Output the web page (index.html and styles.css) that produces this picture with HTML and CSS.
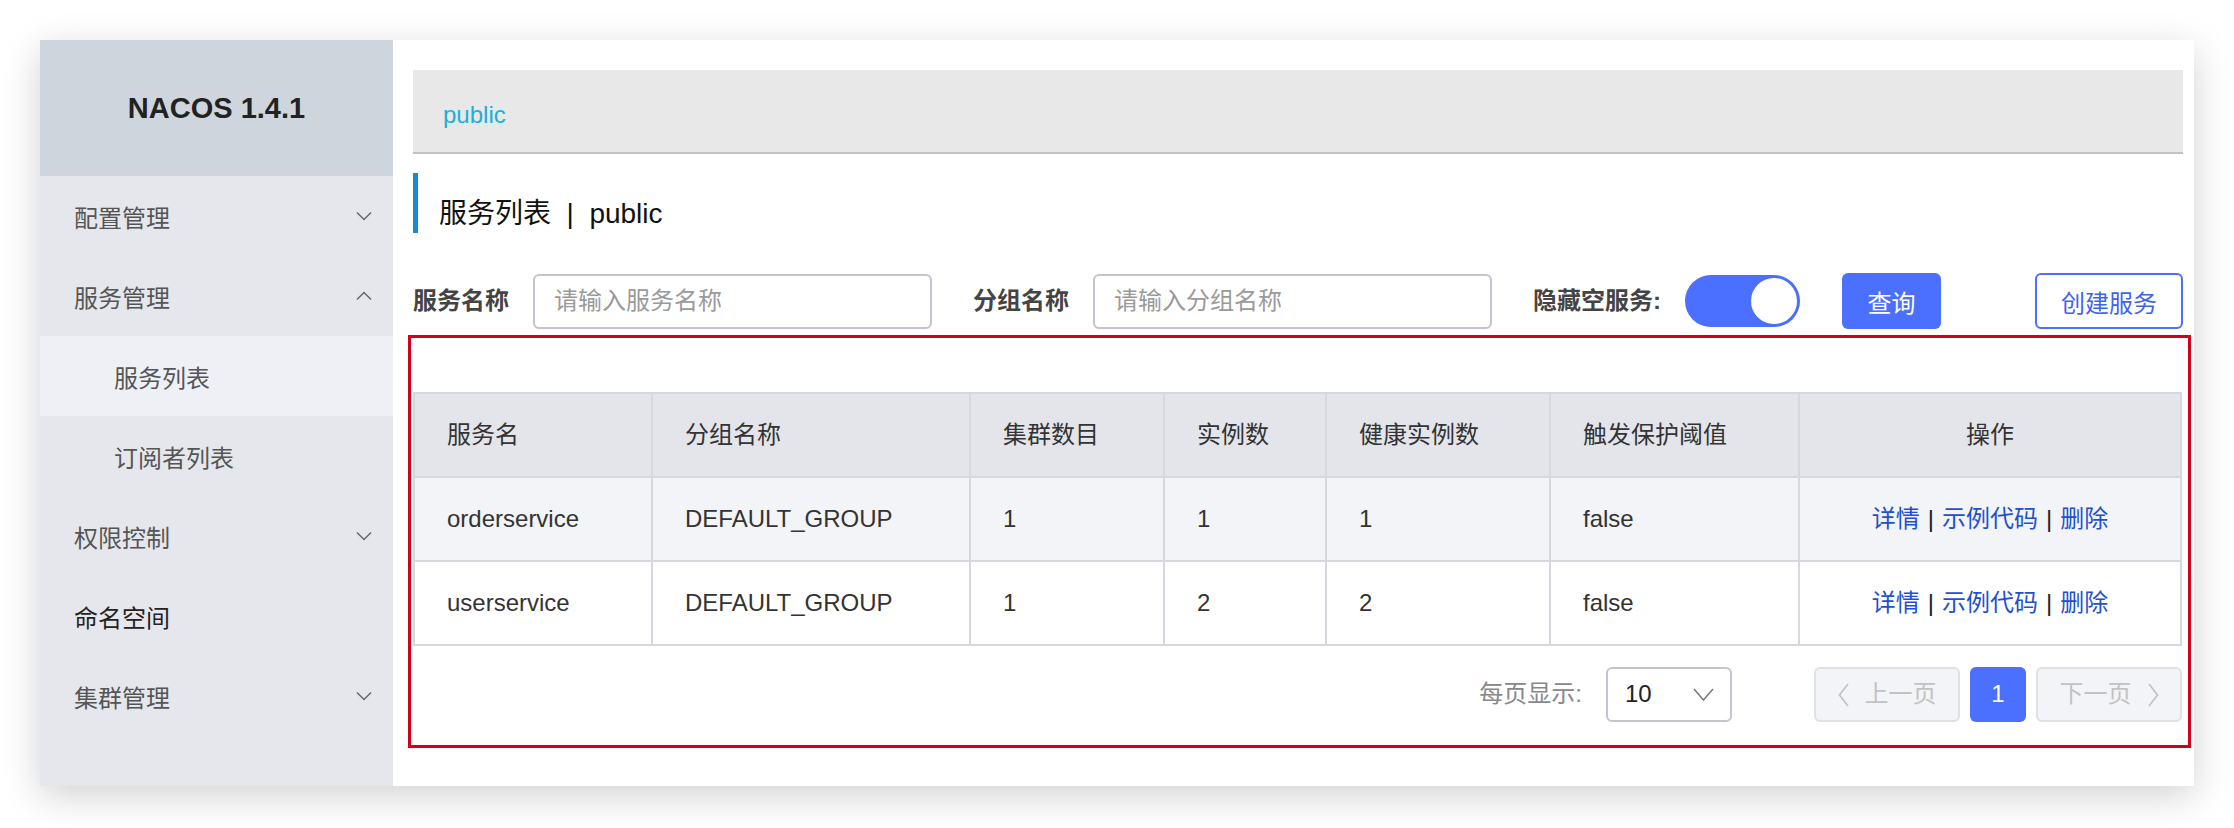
FILE: index.html
```html
<!DOCTYPE html>
<html>
<head>
  <meta charset="utf-8">
  <title>Nacos 服务列表</title>
  <link rel="stylesheet" href="styles.css">
</head>
<body>
  <div class="window">
    <div class="sidebar">
      <div class="logo">NACOS 1.4.1</div>
      <div class="menu-item">
        <span>配置管理</span>
        <svg class="arrow" width="16" height="10" viewBox="0 0 16 10"><polyline points="1,1.5 8,8.5 15,1.5" fill="none" stroke="#666" stroke-width="1.5"/></svg>
      </div>
      <div class="menu-item">
        <span>服务管理</span>
        <svg class="arrow" width="16" height="10" viewBox="0 0 16 10"><polyline points="1,8.5 8,1.5 15,8.5" fill="none" stroke="#666" stroke-width="1.5"/></svg>
      </div>
      <div class="menu-item sub active"><span>服务列表</span></div>
      <div class="menu-item sub"><span>订阅者列表</span></div>
      <div class="menu-item">
        <span>权限控制</span>
        <svg class="arrow" width="16" height="10" viewBox="0 0 16 10"><polyline points="1,1.5 8,8.5 15,1.5" fill="none" stroke="#666" stroke-width="1.5"/></svg>
      </div>
      <div class="menu-item dark"><span>命名空间</span></div>
      <div class="menu-item">
        <span>集群管理</span>
        <svg class="arrow" width="16" height="10" viewBox="0 0 16 10"><polyline points="1,1.5 8,8.5 15,1.5" fill="none" stroke="#666" stroke-width="1.5"/></svg>
      </div>
    </div>

    <div class="main">
      <div class="crumb">public</div>

      <div class="title">服务列表 &nbsp;|&nbsp; public</div>

      <div class="filter">
        <span class="label">服务名称</span>
        <input class="text-input" type="text" placeholder="请输入服务名称">
        <span class="label">分组名称</span>
        <input class="text-input" type="text" placeholder="请输入分组名称">
        <span class="label">隐藏空服务:</span>
        <div class="switch"><div class="knob"></div></div>
        <button class="btn-primary">查询</button>
        <button class="btn-outline">创建服务</button>
      </div>

      <div class="annot">
        <table class="service-table">
          <colgroup>
            <col style="width: 238px">
            <col style="width: 318px">
            <col style="width: 194px">
            <col style="width: 162px">
            <col style="width: 224px">
            <col style="width: 249px">
            <col style="width: 382px">
          </colgroup>
          <thead>
            <tr>
              <th>服务名</th>
              <th>分组名称</th>
              <th>集群数目</th>
              <th>实例数</th>
              <th>健康实例数</th>
              <th>触发保护阈值</th>
              <th class="ops">操作</th>
            </tr>
          </thead>
          <tbody>
            <tr class="odd">
              <td>orderservice</td>
              <td>DEFAULT_GROUP</td>
              <td>1</td>
              <td>1</td>
              <td>1</td>
              <td>false</td>
              <td class="ops"><a>详情</a><span class="sep">|</span><a>示例代码</a><span class="sep">|</span><a>删除</a></td>
            </tr>
            <tr>
              <td>userservice</td>
              <td>DEFAULT_GROUP</td>
              <td>1</td>
              <td>2</td>
              <td>2</td>
              <td>false</td>
              <td class="ops"><a>详情</a><span class="sep">|</span><a>示例代码</a><span class="sep">|</span><a>删除</a></td>
            </tr>
          </tbody>
        </table>

        <div class="pager">
          <span class="pager-label">每页显示:</span>
          <div class="page-size">
            <span>10</span>
            <svg width="21" height="13" viewBox="0 0 21 13"><polyline points="1,1 10.5,12 20,1" fill="none" stroke="#777" stroke-width="1.5"/></svg>
          </div>
          <div class="page-btn">
            <svg width="11" height="24" viewBox="0 0 11 24"><polyline points="10,1 1.5,12 10,23" fill="none" stroke="#c4c4c4" stroke-width="1.8"/></svg>
            <span>上一页</span>
          </div>
          <div class="page-num">1</div>
          <div class="page-btn">
            <span>下一页</span>
            <svg width="11" height="24" viewBox="0 0 11 24"><polyline points="1,1 9.5,12 1,23" fill="none" stroke="#c4c4c4" stroke-width="1.8"/></svg>
          </div>
        </div>
      </div>
    </div>
  </div>
</body>
</html>
```

FILE: styles.css
```css
body {
  margin: 0;
  padding: 40px;
  background-color: #fff;
  font-family: "Liberation Sans", "Noto Sans CJK SC", sans-serif;
  line-height: 1.2;
}
.window {
  display: flex;
  width: 2154px;
  height: 746px;
  background-color: #fff;
  box-shadow: 0 10px 36px rgba(0, 0, 0, 0.18);
}
.sidebar {
  width: 353px;
  flex-shrink: 0;
  background-color: #e6e7ec;
}
.logo {
  height: 136px;
  display: flex;
  align-items: center;
  justify-content: center;
  background-color: #ced5dd;
  font-size: 29px;
  font-weight: bold;
  color: #222;
}
.menu-item {
  height: 80px;
  display: flex;
  align-items: center;
  justify-content: space-between;
  padding: 0 21px 0 34px;
  font-size: 24px;
  color: #555;
}
.menu-item span {
  padding-top: 7px;
}
.menu-item.sub {
  padding-left: 74px;
}
.menu-item.active {
  background-color: #eff0f5;
}
.menu-item.dark {
  color: #222;
}
.main {
  flex-grow: 1;
  padding: 30px 13px 0 20px;
  display: flex;
  flex-direction: column;
}
.crumb {
  height: 84px;
  display: flex;
  align-items: center;
  padding: 8px 0 0 30px;
  box-sizing: border-box;
  background-color: #e8e8e8;
  border-bottom: 2px solid #c3c3c3;
  font-size: 24px;
  color: #1ab0d8;
}
.title {
  margin-top: 19px;
  height: 60px;
  display: flex;
  align-items: center;
  padding: 22px 0 0 21px;
  box-sizing: border-box;
  border-left: 5px solid #178bcb;
  font-size: 28px;
  color: #111;
}
.filter {
  margin-top: 40px;
  height: 56px;
  display: flex;
  align-items: center;
}
.label {
  margin-right: 24px;
  font-size: 24px;
  font-weight: bold;
  color: #444;
}
.text-input {
  width: 399px;
  height: 55px;
  box-sizing: border-box;
  margin: 0 41px 0 0;
  padding: 0 0 0 19px;
  border: 2px solid #c2c5cf;
  border-radius: 6px;
  font-family: inherit;
  font-size: 24px;
  color: #333;
  outline: none;
}
.text-input::placeholder {
  color: #9a9a9a;
}
.switch {
  width: 115px;
  height: 52px;
  box-sizing: border-box;
  padding: 1px;
  margin-right: 42px;
  display: flex;
  justify-content: flex-end;
  border-radius: 26px;
  background-color: #4b6fff;
}
.knob {
  width: 50px;
  height: 50px;
  box-sizing: border-box;
  border: 2px solid #4b6fff;
  border-radius: 50%;
  background-color: #fff;
}
.btn-primary {
  width: 99px;
  height: 56px;
  border: none;
  border-radius: 6px;
  background-color: #4b6fff;
  color: #fff;
  font-family: inherit;
  font-size: 24px;
}
.btn-outline {
  margin-left: auto;
  width: 148px;
  height: 56px;
  border: 2px solid #4b6fff;
  border-radius: 6px;
  background-color: #fff;
  color: #3d63f5;
  font-family: inherit;
  font-size: 24px;
}
.annot {
  margin: 6px -8px 0 -5px;
  padding: 54px 6px 23px 2px;
  border: 3px solid #d0021b;
}
.service-table {
  width: 1767px;
  table-layout: fixed;
  border-collapse: collapse;
  border: 2px solid #d6d8df;
  font-size: 24px;
  color: #333;
}
.service-table th,
.service-table td {
  height: 82px;
  padding: 0 32px;
  border: 2px solid #d6d8df;
  text-align: left;
  font-weight: normal;
  white-space: nowrap;
}
.service-table th {
  background-color: #e4e5ea;
}
.service-table tr.odd td {
  background-color: #f2f4f7;
}
.service-table .ops {
  text-align: center;
}
.service-table .ops a {
  color: #1e50d0;
}
.sep {
  margin: 0 8px;
  color: #222;
}
.pager {
  margin-top: 21px;
  display: flex;
  justify-content: flex-end;
  align-items: center;
  font-size: 24px;
}
.pager-label {
  margin-right: 24px;
  color: #888;
}
.page-size {
  width: 126px;
  height: 55px;
  box-sizing: border-box;
  margin-right: 82px;
  padding: 0 16px 0 17px;
  display: flex;
  align-items: center;
  justify-content: space-between;
  border: 2px solid #c2c5cf;
  border-radius: 6px;
  color: #222;
}
.page-btn {
  width: 146px;
  height: 55px;
  box-sizing: border-box;
  display: flex;
  align-items: center;
  justify-content: center;
  gap: 16px;
  border: 2px solid #dfe1e6;
  border-radius: 6px;
  background-color: #f3f4f7;
  color: #c2c2c2;
}
.page-num {
  width: 56px;
  height: 55px;
  margin: 0 10px;
  display: flex;
  align-items: center;
  justify-content: center;
  border-radius: 6px;
  background-color: #4b6fff;
  color: #fff;
}
```
